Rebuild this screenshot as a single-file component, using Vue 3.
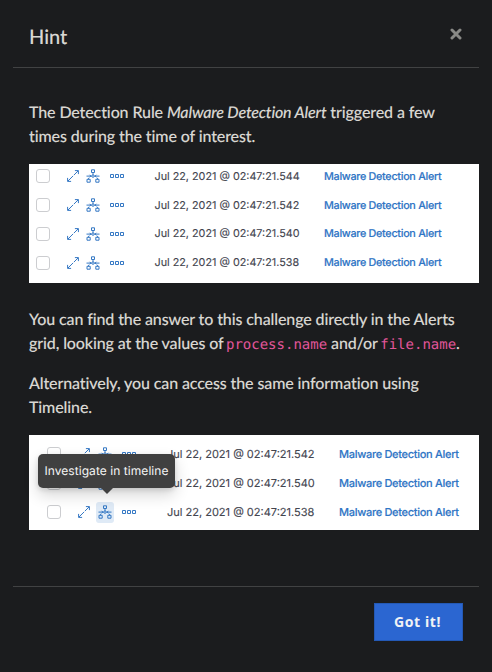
<script setup>
const first = ['544', '542', '540', '538']
const second = ['542', '540', '538']
</script>

<template>
  <div class="dialog">
    <svg class="defs" width="0" height="0" aria-hidden="true">
      <symbol id="expand" viewBox="0 0 12 12">
        <path d="M7.9 .6h3.5v3.5M11.2 .8L6.9 5.1M6.1 5.9L.8 11.2M.6 7.9v3.5h3.5" />
      </symbol>
      <symbol id="tree" viewBox="0 0 14 14">
        <path d="M5.5 .8h3v2.7h-3zM1 10.3h3.2v2.9H1zM9.8 10.3h3.2v2.9H9.8zM7 3.5V6M.5 7.1H5.8M8.2 7.1h5.3M3.6 5.8l1.3 1.3-1.3 1.2M10.4 5.8L9.1 7.1l1.3 1.2M2.6 8.9v1.4M11.4 8.9v1.4" />
        <circle cx="7" cy="7.1" r="1.2" />
      </symbol>
      <symbol id="dots" viewBox="0 0 14 4">
        <path d="M.5 .5h3v3h-3zM5.5 .5h3v3h-3zM10.5 .5h3v3h-3z" />
      </symbol>
    </svg>
    <header class="head">
      <h1>Hint</h1>
      <svg class="close" viewBox="0 0 12 12"><path d="M2 2l8 8M10 2l-8 8" /></svg>
    </header>
    <main class="body">
      <p>The Detection Rule <em>Malware Detection Alert</em> triggered a few<br />times during the time of interest.</p>
      <div class="grid one">
        <div v-for="ms in first" :key="ms" class="row">
          <span class="check"></span>
          <svg class="expand"><use href="#expand" /></svg>
          <span class="slot"><svg class="tree"><use href="#tree" /></svg></span>
          <svg class="dots"><use href="#dots" /></svg>
          <span class="date">Jul 22, 2021 @ 02:47:21.{{ ms }}</span>
          <span class="rule">Malware Detection Alert</span>
        </div>
      </div>
      <p>You can find the answer to this challenge directly in the Alerts<br />grid, looking at the values of <code>process.name</code> and/or <code>file.name</code>.</p>
      <p class="alt">Alternatively, you can access the same information using<br />Timeline.</p>
      <div class="grid two">
        <div v-for="(ms, i) in second" :key="ms" class="row">
          <span class="check"></span>
          <svg class="expand"><use href="#expand" /></svg>
          <span class="slot" :class="{ active: i === 2 }"><svg class="tree"><use href="#tree" /></svg></span>
          <svg class="dots"><use href="#dots" /></svg>
          <span class="date">Jul 22, 2021 @ 02:47:21.{{ ms }}</span>
          <span class="rule">Malware Detection Alert</span>
        </div>
        <div class="tooltip">Investigate in timeline</div>
      </div>
    </main>
    <footer class="foot"><button type="button">Got it!</button></footer>
  </div>
</template>

<style>
body { margin: 0; background: #1b1c1e; }
</style>

<style scoped>
.dialog {
  box-sizing: border-box;
  width: 492px;
  height: 672px;
  padding: 0 13px;
  display: flex;
  flex-direction: column;
  background: #1b1c1e;
  color: #dad8d3;
  font-family: Lato, sans-serif;
  text-rendering: geometricPrecision;
  overflow: hidden;
}
.defs { position: absolute; }
svg { display: block; fill: none; stroke: #3578c4; stroke-width: 1; }
.head {
  box-sizing: border-box;
  height: 68px;
  padding: 5px 17px 0 16px;
  display: flex;
  justify-content: space-between;
  align-items: center;
  border-bottom: 1px solid #414243;
}
h1 { margin: 2px 0 0; font-size: 20px; font-weight: 500; line-height: 28px; -webkit-text-stroke: .1px #dad8d3; }
.close { width: 12px; height: 12px; margin-top: -5px; stroke: #898986; stroke-width: 3; stroke-linecap: round; }
.body { box-sizing: border-box; height: 518px; padding: 33px 0 0 16px; }
p { margin: 0; height: 48px; font-size: 16px; line-height: 24px; font-weight: 500; white-space: nowrap; letter-spacing: -.11px; -webkit-text-stroke: .12px #dad8d3; }
em { letter-spacing: -.17px; }
.alt { margin-top: 16px; }
code { margin-left: -1.2px; font: 14px "DejaVu Sans Mono", monospace; color: #e2569a; letter-spacing: 0; -webkit-text-stroke: 0; }
.grid {
  box-sizing: border-box;
  width: 450px;
  background: #fff;
  font-family: Inter, sans-serif;
  color: #43454f;
}
.one { height: 119px; margin: 15px 0 25px; }
.two { position: relative; height: 95px; margin-top: 15px; padding-top: 4.2px; }
.row { display: grid; align-items: center; white-space: nowrap; }
.one .row { height: 28.75px; grid-template-columns: 31px 17px 32px 38.5px 169.5px 1fr; padding-left: 7px; font-size: 10.8px; position: relative; top: -2px; }
.two .row { height: 29.2px; grid-template-columns: 30px 15px 35px 40px 172px 1fr; padding-left: 18px; font-size: 11px; }
.check { box-sizing: border-box; width: 14px; height: 14px; border: 1px solid #cccdd0; border-radius: 3px; background: #fff; }
.expand { width: 12px; height: 12px; }
.two .expand { margin-left: 1px; }
.tree { width: 14px; height: 14px; }
.dots { width: 14px; height: 4px; margin-left: -6px; }
.two .dots { margin-left: -5px; }
.slot { display: flex; align-items: center; justify-content: center; width: 18px; height: 21px; border-radius: 3px; }
.two .slot { margin-left: 4px; }
.active { background: #dfeaf6; }
.date { -webkit-text-stroke: .12px #43454f; }
.rule { color: #2f75c5; font-weight: 500; letter-spacing: -.3px; -webkit-text-stroke: .15px #2f75c5; }
.one .rule { font-size: 10.8px; }
.tooltip {
  position: absolute;
  left: 9px;
  top: 19px;
  box-sizing: border-box;
  width: 137px;
  height: 34px;
  border-radius: 5px;
  background: #404040;
  color: #f4f4f4;
  font-size: 12px;
  letter-spacing: .06px;
  line-height: 34px;
  text-align: center;
  white-space: nowrap;
  box-shadow: 0 7px 15px rgba(0, 0, 0, .16), 0 2px 5px rgba(0, 0, 0, .12);
}
.tooltip::after {
  content: "";
  position: absolute;
  left: 63px;
  top: 34px;
  border: 6px solid transparent;
  border-top-color: #404040;
  border-bottom: 0;
}
.foot { flex: 1; display: flex; justify-content: flex-end; align-items: flex-start; padding: 16px 16px 0 0; border-top: 1px solid #414243; }
button {
  width: 89px;
  height: 38px;
  padding: 0 2px 2px 0;
  border: 1px solid #2459b5;
  background: #2b66d1;
  color: #f0f2f5;
  font: 700 14px "Noto Sans", sans-serif;
  letter-spacing: .6px;
}
</style>
